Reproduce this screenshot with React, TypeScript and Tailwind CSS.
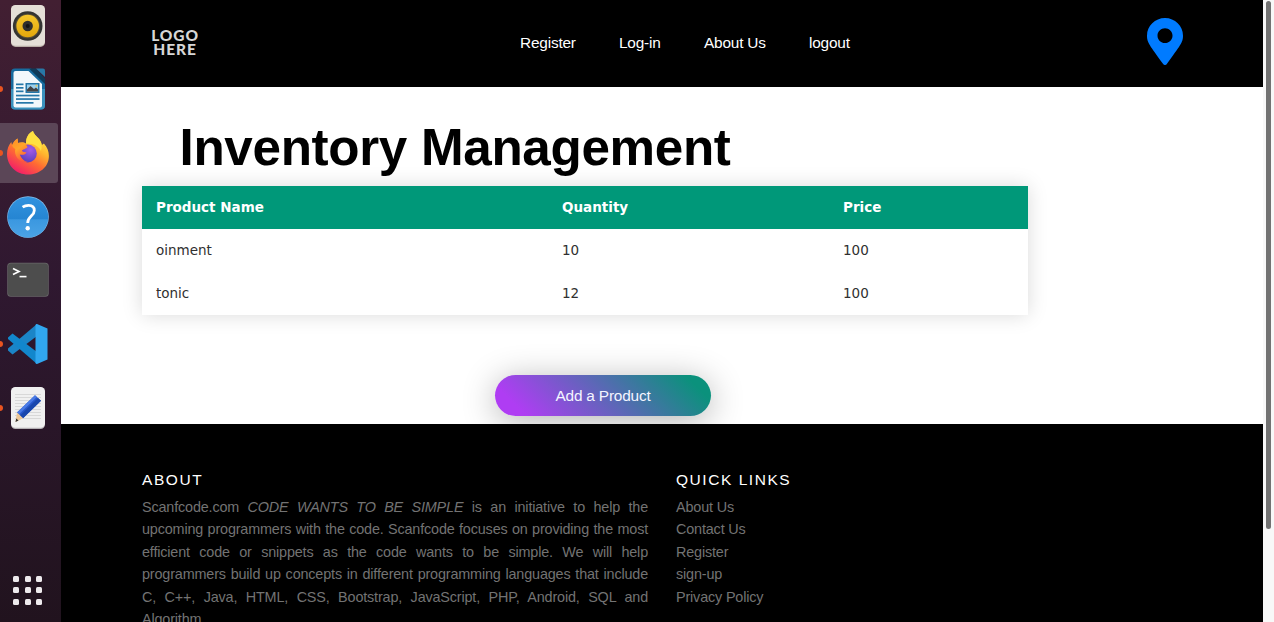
import React from "react";

const products = [
  { name: "oinment", quantity: 10, price: 100 },
  { name: "tonic", quantity: 12, price: 100 },
];

const quickLinks = ["About Us", "Contact Us", "Register", "sign-up", "Privacy Policy"];

function Speaker() {
  return (
    <svg width="42" height="44" viewBox="0 0 42 44">
      <defs>
        <linearGradient id="cone" x1="0" y1="0" x2="0" y2="1">
          <stop offset="0" stopColor="#f5c62c" />
          <stop offset="1" stopColor="#e3a80c" />
        </linearGradient>
      </defs>
      <rect x="4" y="1.400" width="34" height="41.500" rx="4.500" fill="#b9aea6" />
      <rect x="4" y="1" width="34" height="40.800" rx="4.500" fill="#e5dfd7" />
      <circle cx="20.700" cy="22" r="14.800" fill="#343432" />
      <circle cx="20.700" cy="22" r="12.300" fill="#5a5034" />
      <circle cx="20.700" cy="22" r="11.300" fill="url(#cone)" />
      <circle cx="20.700" cy="22" r="5.200" fill="#302f2d" />
      <circle cx="20.700" cy="22" r="2" fill="#141414" />
    </svg>
  );
}

function Writer() {
  return (
    <svg width="42" height="44" viewBox="0 0 42 44">
      <path d="M8 1.500h16L38 15v23.500a4 4 0 0 1-4 4H8a4 4 0 0 1-4-4v-33a4 4 0 0 1 4-4z" fill="#176b9e" />
      <path d="M4 22h34v16.500a4 4 0 0 1-4 4H8a4 4 0 0 1-4-4z" fill="#3b92bd" />
      <path d="M8.500 4h13L35 17v21.500a2 2 0 0 1-2 2H8.500a2 2 0 0 1-2-2V6a2 2 0 0 1 2-2z" fill="#f2f8fb" />
      <path d="M22 1.500L38 17v-5L29 1.500z" fill="#0d3b59" />
      <path d="M29 1.500h7a2 2 0 0 1 2 2v6.500z" fill="#2878a6" />
      <g fill="#2577a8">
        <rect x="9" y="16.500" width="7.500" height="1.700" />
        <rect x="9" y="20" width="7.500" height="1.700" />
        <rect x="9" y="23.500" width="7.500" height="1.700" />
        <rect x="9" y="27.700" width="23.500" height="1.700" />
        <rect x="9" y="31.200" width="23.500" height="1.700" />
        <rect x="9" y="35" width="17.500" height="1.700" />
        <rect x="18.500" y="16" width="14" height="10" />
      </g>
      <rect x="20" y="17.500" width="11" height="7" fill="#9bd0ed" />
      <path d="M20 24.500v-2l3.500-3.500 3.500 3 2-1.500 2 2v2z" fill="#444" />
      <circle cx="29.500" cy="18.700" r="1" fill="#e6ca57" />
    </svg>
  );
}

function Firefox() {
  return (
    <svg width="44" height="46" viewBox="0 0 44 46">
      <defs>
        <linearGradient id="flame" x1=".8" y1=".05" x2=".25" y2=".95">
          <stop offset="0" stopColor="#fff04a" />
          <stop offset=".35" stopColor="#ffb52e" />
          <stop offset=".62" stopColor="#ff6c32" />
          <stop offset="1" stopColor="#f31f68" />
        </linearGradient>
        <linearGradient id="mane" x1="0" y1="0" x2=".5" y2="1">
          <stop offset="0" stopColor="#ff8a24" />
          <stop offset=".5" stopColor="#ffa52a" />
          <stop offset="1" stopColor="#ff5a3c" />
        </linearGradient>
        <radialGradient id="globe" cx=".65" cy=".3" r=".8">
          <stop offset="0" stopColor="#a45be8" />
          <stop offset="1" stopColor="#4f3bb8" />
        </radialGradient>
      </defs>
      <path d="M27 1c1 4 4.500 5.500 6.800 9 1.200 1.600 1.800 3.400 2.100 5l2-1.500c3.500 4 5 8 5 12.500C42.900 37 33.500 44.500 22 44.500S1 36 1 24c0-5 1.700-8.700 4.300-12l.7 3c1.200-3 3-4.800 5.500-6.500L12 13c3-1 6-1 8 .5C20 8 22 3.500 27 1z" fill="url(#flame)" />
      <circle cx="21.800" cy="23.500" r="9" fill="url(#globe)" />
      <path d="M5.500 13l.7 2.500c1.200-3 3-5 5.300-7L12 13c3-.8 6.500-.3 8 1.500l1.500 2.500c-.4 1.500-4 2-5.500 3.500 0 1.500 3.500 1.500 4.500 2-1 2.500-4 2.500-6.700 2 1.500 4 4.500 7 8.500 7.500-9 1-14.500-6-13-13-2-1-3.500-3-3.800-6z" fill="url(#mane)" />
      <path d="M20 13.500C20 8 22 3.500 27 1c1 4 4.500 5.500 6.800 9 2 3 2.500 7 1.200 11-2-4-5-6-9-7z" fill="#ffe141" />
    </svg>
  );
}

function Help() {
  return (
    <svg width="42" height="42" viewBox="0 0 42 42">
      <defs>
        <linearGradient id="help" x1="0" y1="0" x2="0" y2="1">
          <stop offset="0" stopColor="#3293df" />
          <stop offset=".54" stopColor="#2585d2" />
          <stop offset=".56" stopColor="#3b98e0" />
          <stop offset="1" stopColor="#4ba3e5" />
        </linearGradient>
      </defs>
      <circle cx="21" cy="21" r="20.800" fill="#86bfeb" />
      <circle cx="21" cy="21.300" r="20.300" fill="url(#help)" />
      <path d="M15.600 11.200c2-1.500 4-1.900 6-1.900 3.600 0 5.700 1.900 5.700 5.100 0 5.600-6.600 5.900-6.600 12.500" fill="none" stroke="#fff" strokeWidth="2.800" />
      <circle cx="20.700" cy="32.300" r="2.200" fill="#fff" />
    </svg>
  );
}

function Terminal() {
  return (
    <svg width="42" height="36" viewBox="0 0 42 36">
      <rect x=".3" y=".8" width="41.400" height="34" rx="3.500" fill="#686768" />
      <rect x="1" y="1.500" width="40" height="32.500" rx="3" fill="#4d4d4d" />
      <path d="M6 6.500l6 3-6 3" fill="none" stroke="#fff" strokeWidth="1.700" />
      <path d="M12.500 14.600h7" stroke="#fff" strokeWidth="1.600" />
    </svg>
  );
}

function Code() {
  return (
    <svg width="42" height="42" viewBox="0 0 42 42">
      <path d="M30 1v12L5.500 31.500 1 27.500v-2z" fill="#1b85c7" />
      <path d="M1 14.500l4.500-4L30 29V41L1 16z" fill="#1287cc" />
      <path d="M30 1l10.500 4.500V36.500L30 41c-1.300 0-1.500-.8-1.500-1.500V2.500C28.500 1.500 29 1 30 1z" fill="#31a7ef" />
    </svg>
  );
}

function Editor() {
  return (
    <svg width="42" height="44" viewBox="0 0 42 44">
      <rect x="4" y="1.500" width="34" height="41.500" rx="4.500" fill="#b5b1b5" />
      <rect x="4" y="1" width="34" height="40.800" rx="4.500" fill="#f0f0f0" />
      <g stroke="#cdcdcd" strokeWidth=".7">
        <path d="M8 8.500h26M8 11.500h26M8 14.500h26M8 17.500h26M8 20.500h26M8 23.500h26M8 26.500h26M8 29.500h26M8 32.500h26" />
      </g>
      <path d="M28 9.200l6 5.500-18 17.500-6-5.700z" fill="#2858cb" />
      <path d="M31 12l3 2.700-18 17.500-3-2.800z" fill="#1947ad" />
      <path d="M28 9.200l1.800 1.700-17.800 17.400-2-1.800z" fill="#4a7be6" />
      <path d="M10 26.500l6 5.700-7.500 3.800z" fill="#edc797" />
      <path d="M9.200 32.600l2.300 2-3 1.400z" fill="#303030" />
    </svg>
  );
}

function DockItem({ children, running, active }: { children: React.ReactNode; running?: boolean; active?: boolean }) {
  return (
    <div className={"relative flex h-[60px] w-[58px] shrink-0 items-center justify-center rounded-r-[3px] pr-[3px] " + (active ? "bg-[#5b4657]" : "")}>
      {running && <span className="absolute -left-[3px] top-[27px] size-[6px] rounded-full bg-[#e95420]" />}
      {children}
    </div>
  );
}

function Dock() {
  return (
    <aside className="flex h-full w-[61px] shrink-0 flex-col justify-between bg-linear-to-b from-[#421f32] via-[#2f1830] via-45% to-[#21131e]">
      <div className="-mt-[4.500px] flex flex-col gap-[3.700px]">
        <DockItem><Speaker /></DockItem>
        <DockItem running><Writer /></DockItem>
        <DockItem running active><Firefox /></DockItem>
        <DockItem><Help /></DockItem>
        <DockItem><Terminal /></DockItem>
        <DockItem running><Code /></DockItem>
        <DockItem running><Editor /></DockItem>
      </div>
      <div className="mb-[17.500px] ml-[13px] grid w-[29px] grid-cols-3 gap-[5.500px]">
        {Array.from({ length: 9 }, (_, i) => (
          <span key={i} className="size-[6px] rounded-[1.500px] bg-[#eeeaed]" />
        ))}
      </div>
    </aside>
  );
}

export default function App() {
  return (
    <div className="flex h-[622px] w-[1274px] overflow-hidden bg-white font-['Liberation_Sans',Arial,sans-serif]">
      <Dock />
      <div className="flex min-w-0 flex-1 flex-col">
        <header className="flex h-[87px] shrink-0 items-start bg-black text-white">
          <div className="ml-[89px] mt-[28px] w-[50px] whitespace-nowrap text-center font-[Lato,sans-serif] text-[15.500px] font-black leading-[14px] tracking-[0.900px] text-[#d6d6d6]">
            <div>LOGO</div>
            <div>HERE</div>
          </div>
          <nav className="ml-[320px] mt-[32px] flex gap-[43px] text-[15.400px] leading-[22px] tracking-[-0.190px]">
            <a className="w-[56px] whitespace-nowrap">Register</a>
            <a className="w-[42px] whitespace-nowrap">Log-in</a>
            <a className="w-[62px] whitespace-nowrap">About Us</a>
            <a>logout</a>
          </nav>
          <svg className="ml-auto mr-[80.500px] mt-[18px]" width="36" height="47" viewBox="0 0 384 512" preserveAspectRatio="none">
            <path fill="#007bff" d="M172.300 501.700C27 291 0 269.400 0 192 0 86 86 0 192 0s192 86 192 192c0 77.400-27 99-172.300 309.700-9.500 13.800-29.900 13.800-39.400 0zM192 272c44.200 0 80-35.800 80-80s-35.800-80-80-80-80 35.800-80 80 35.800 80 80 80z" />
          </svg>
        </header>
        <main className="flex h-[336.500px] shrink-0 flex-col pl-[81px]">
          <h1 className="ml-[37.500px] mt-[30px] h-[69px] whitespace-nowrap text-[51.200px] font-bold leading-[61px] tracking-[-0.320px] text-black">Inventory Management</h1>
          <table className="w-[885.500px] table-fixed border-collapse font-['DejaVu_Sans',sans-serif] text-[13.500px] text-[#303030] shadow-[0_0_19px_rgba(0,0,0,0.15)]">
            <colgroup>
              <col className="w-[406px]" />
              <col className="w-[281px]" />
              <col />
            </colgroup>
            <thead>
              <tr className="h-[43px] bg-[#009879] text-left text-white">
                <th className="px-[14px] py-0">Product Name</th>
                <th className="px-[14px] py-0">Quantity</th>
                <th className="px-[14px] py-0">Price</th>
              </tr>
            </thead>
            <tbody>
              {products.map((p) => (
                <tr key={p.name} className="h-[43px]">
                  <td className="px-[14px] py-0">{p.name}</td>
                  <td className="px-[14px] py-0">{p.quantity}</td>
                  <td className="px-[14px] py-0">{p.price}</td>
                </tr>
              ))}
            </tbody>
          </table>
          <button className="ml-[353px] mt-[60px] h-[41px] w-[216px] shrink-0 rounded-full bg-[linear-gradient(45deg,#af3df3_12%,#0b917c_90%)] pt-px text-[15.400px] tracking-[-0.190px] text-[#f4f5ff] shadow-[0_5px_34px_rgba(0,0,0,0.3)]">Add a Product</button>
        </main>
        <footer className="flex flex-1 items-start bg-black pl-[81px] pt-[45px] text-[14.400px] leading-[22.500px] tracking-[-0.160px] text-[#737373]">
          <section className="w-[506px] shrink-0">
            <h6 className="mb-[6px] text-[15.500px] leading-[21px] tracking-[1.550px] text-white">ABOUT</h6>
            <p className="text-justify">
              Scanfcode.com <i>CODE WANTS TO BE SIMPLE</i> is an initiative to help the upcoming programmers with the code. Scanfcode focuses on providing the most efficient code or snippets as the code wants to be simple. We will help programmers build up concepts in different programming languages that include C, C++, Java, HTML, CSS, Bootstrap, JavaScript, PHP, Android, SQL and Algorithm.
            </p>
          </section>
          <section className="ml-[28px]">
            <h6 className="mb-[6px] text-[15.500px] leading-[21px] tracking-[1.550px] text-white">QUICK LINKS</h6>
            <ul>
              {quickLinks.map((label) => (
                <li key={label}>{label}</li>
              ))}
            </ul>
          </section>
        </footer>
      </div>
      <div className="flex h-full w-[11px] shrink-0 justify-center bg-[#f8f8f8]">
        <div className="mt-px h-[528px] w-[5px] rounded-full bg-[#727272]" />
      </div>
    </div>
  );
}
